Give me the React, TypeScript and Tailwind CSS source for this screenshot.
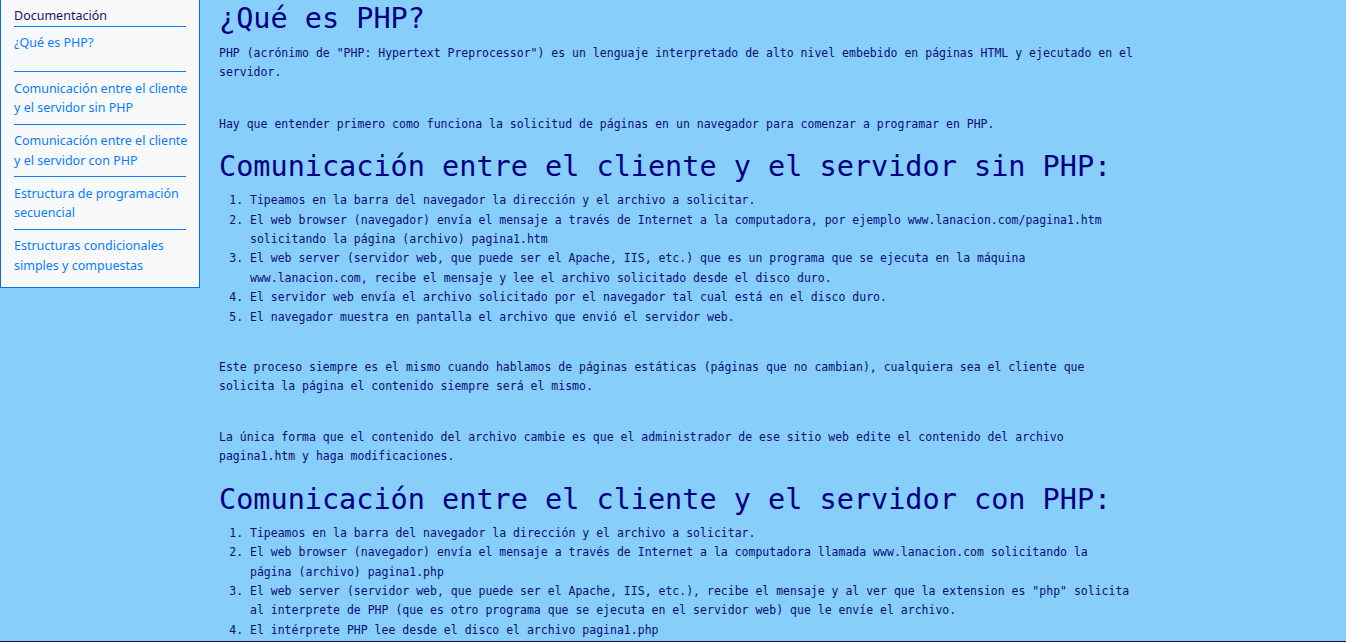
const sideLinks: string[][] = [
  ["Comunicación entre el cliente", "y el servidor sin PHP"],
  ["Comunicación entre el cliente", "y el servidor con PHP"],
  ["Estructura de programación", "secuencial"],
  ["Estructuras condicionales", "simples y compuestas"],
];

const sinPhp = [
  "Tipeamos en la barra del navegador la dirección y el archivo a solicitar.",
  "El web browser (navegador) envía el mensaje a través de Internet a la computadora, por ejemplo www.lanacion.com/pagina1.htm solicitando la página (archivo) pagina1.htm",
  "El web server (servidor web, que puede ser el Apache, IIS, etc.) que es un programa que se ejecuta en la máquina www.lanacion.com, recibe el mensaje y lee el archivo solicitado desde el disco duro.",
  "El servidor web envía el archivo solicitado por el navegador tal cual está en el disco duro.",
  "El navegador muestra en pantalla el archivo que envió el servidor web.",
];

// only the first four steps fit in the viewport
const conPhp = [
  "Tipeamos en la barra del navegador la dirección y el archivo a solicitar.",
  "El web browser (navegador) envía el mensaje a través de Internet a la computadora llamada www.lanacion.com solicitando la página (archivo) pagina1.php",
  "El web server (servidor web, que puede ser el Apache, IIS, etc.), recibe el mensaje y al ver que la extension es \"php\" solicita al interprete de PHP (que es otro programa que se ejecuta en el servidor web) que le envíe el archivo.",
  "El intérprete PHP lee desde el disco el archivo pagina1.php",
];

function Sidebar() {
  return (
    <aside className="w-[200px] shrink-0 self-start border-x border-b border-[#0a6fe8] bg-[#f8f9fa] px-[13px] pb-[6px] font-['Noto_Sans',sans-serif] text-[12.5px] leading-[19.5px] whitespace-nowrap">
      <div className="border-b border-[#0a7cff] pt-[6px] text-[#1f0f6b]">Documentación</div>
      <div className="border-b border-[#0a7cff] pt-[6px] pb-[19px]">
        <a className="text-[#0a7cff]">¿Qué es PHP?</a>
      </div>
      {sideLinks.map((lines, i) => (
        <div
          key={i}
          className={
            i < sideLinks.length - 1
              ? "border-b border-[#0a7cff] pt-[6.5px] pb-[6px] text-[#0a7cff]"
              : "pt-[6.5px] pb-[6px] text-[#0a7cff]"
          }
        >
          {lines[0]}
          <br />
          {lines[1]}
        </div>
      ))}
    </aside>
  );
}

function Heading({ children }: { children: React.ReactNode }) {
  return <h2 className="text-[28.5px] leading-[32px] text-[#000080]">{children}</h2>;
}

function Steps({ items }: { items: string[] }) {
  return (
    <ol className="mt-[8px] list-decimal pl-[31px]">
      {items.map((t, i) => (
        <li key={i}>{t}</li>
      ))}
    </ol>
  );
}

export default function App() {
  return (
    <div className="h-[642px] overflow-hidden border-b border-[#1c1c3c] bg-[#87cefa]">
      <div className="flex items-start">
        <Sidebar />
        <main className="ml-[19px] w-[914px] pt-[3px] font-['DejaVu_Sans_Mono',monospace] text-[11.5px] leading-[19.4px] text-[#0d0b78]">
          <Heading>¿Qué es PHP?</Heading>
          <p className="mt-[9px]">
            PHP (acrónimo de "PHP: Hypertext Preprocessor") es un lenguaje interpretado de alto nivel
            embebido en páginas HTML y ejecutado en el servidor.
          </p>
          <p className="mt-[32px]">
            Hay que entender primero como funciona la solicitud de páginas en un navegador para
            comenzar a programar en PHP.
          </p>
          <div className="mt-[17px]">
            <Heading>Comunicación entre el cliente y el servidor sin PHP:</Heading>
          </div>
          <Steps items={sinPhp} />
          <p className="mt-[31px]">
            Este proceso siempre es el mismo cuando hablamos de páginas estáticas (páginas que no
            cambian), cualquiera sea el cliente que solicita la página el contenido siempre será el
            mismo.
          </p>
          <p className="mt-[31px]">
            La única forma que el contenido del archivo cambie es que el administrador de ese sitio
            web edite el contenido del archivo pagina1.htm y haga modificaciones.
          </p>
          <div className="mt-[17px]">
            <Heading>Comunicación entre el cliente y el servidor con PHP:</Heading>
          </div>
          <Steps items={conPhp} />
        </main>
      </div>
    </div>
  );
}
